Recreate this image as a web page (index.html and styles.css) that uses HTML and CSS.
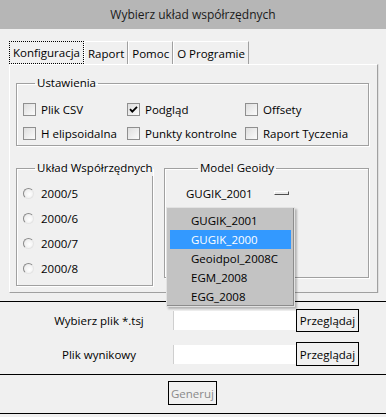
FILE: index.html
```html
<!DOCTYPE html>
<html lang="pl">
<head>
<meta charset="utf-8">
<title>Wybierz układ współrzędnych</title>
<link rel="stylesheet" href="styles.css">
</head>
<body>
<div class="titlebar">Wybierz układ współrzędnych</div>

<div class="tabstrip">
  <div class="tab tab-active">Konfiguracja</div>
  <div class="tab">Raport</div>
  <div class="tab">Pomoc</div>
  <div class="tab">O Programie</div>
</div>

<div class="panel">
  <fieldset class="group group-settings">
    <legend>Ustawienia</legend>
    <div class="checkgrid">
      <label class="check"><span class="box"></span>Plik CSV</label>
      <label class="check"><span class="box"><svg width="11" height="11" viewBox="0 0 11 11"><path d="M2 5.2 L4.3 7.6 L9 2.8" fill="none" stroke="#000" stroke-width="1.8"/></svg></span>Podgląd</label>
      <label class="check"><span class="box"></span>Offsety</label>
      <label class="check"><span class="box"></span>H elipsoidalna</label>
      <label class="check"><span class="box"></span>Punkty kontrolne</label>
      <label class="check"><span class="box"></span>Raport Tyczenia</label>
    </div>
  </fieldset>

  <div class="grouprow">
    <fieldset class="group group-coords">
      <legend>Układ Współrzędnych</legend>
      <label class="radio"><span class="dot"></span>2000/5</label>
      <label class="radio"><span class="dot"></span>2000/6</label>
      <label class="radio"><span class="dot"></span>2000/7</label>
      <label class="radio"><span class="dot"></span>2000/8</label>
    </fieldset>
    <fieldset class="group group-geoid">
      <legend>Model Geoidy</legend>
      <div class="combo">
        <span class="combo-value">GUGIK_2001</span>
        <span class="combo-btn"></span>
      </div>
    </fieldset>
  </div>
</div>

<div class="rule rule-first"></div>

<div class="formrow formrow-first">
  <span class="flabel">Wybierz plik *.tsj</span>
  <span class="finput"></span>
  <span class="fbutton">Przeglądaj</span>
</div>
<div class="formrow formrow-second">
  <span class="flabel">Plik wynikowy</span>
  <span class="finput"></span>
  <span class="fbutton">Przeglądaj</span>
</div>

<div class="rule rule-second"></div>

<div class="generate-row">
  <span class="gbutton">Generuj</span>
</div>

<div class="rule rule-third"></div>

<ul class="dropdown">
  <li>GUGIK_2001</li>
  <li class="selected">GUGIK_2000</li>
  <li>Geoidpol_2008C</li>
  <li>EGM_2008</li>
  <li>EGG_2008</li>
</ul>
</body>
</html>
```
FILE: styles.css
```css
html, body {
  margin: 0;
  padding: 0;
}
body {
  position: relative;
  width: 386px;
  height: 417px;
  overflow: hidden;
  background: #f0f0f0;
  font-family: "Open Sans", "Noto Sans", sans-serif;
  font-size: 11.5px;
  color: #000;
}

.titlebar {
  height: 29px;
  display: flex;
  align-items: center;
  justify-content: center;
  background: #b6b6b6;
  color: #1a1a1a;
  font-size: 12px;
}

.tabstrip {
  display: flex;
  margin: 12px 0 0 9px;
  height: 23px;
}
.tab {
  display: flex;
  align-items: center;
  padding: 0 3px;
  border-left: 1px solid #fff;
  border-top: 1px solid #fff;
  border-right: 1px solid #a0a0a0;
  box-sizing: border-box;
  height: 23px;
}
.tab-active {
  border: 1px dotted #000;
  padding: 0 3px;
}

.panel {
  margin: 0 8px 0 9px;
  height: 229px;
  box-sizing: border-box;
  border-top: 1px solid #fff;
  border-left: 1px solid #fff;
  border-right: 1px solid #a0a0a0;
  border-bottom: 1px solid #a0a0a0;
  box-shadow: 1px 0 0 #e0e0e0;
  padding: 10px 0 0 6px;
}

.group {
  margin: 0;
  border: 1px solid #a0a0a0;
  box-shadow: 1px 1px 0 #fff, inset 1px 1px 0 #fff;
  padding: 0;
  box-sizing: border-box;
  min-width: 0;
}
.group legend {
  padding: 0 2px;
  margin-left: 12px;
  line-height: 16px;
  white-space: nowrap;
}

.group-settings {
  width: 353px;
  padding: 6px 0 0 6px;
}
.checkgrid {
  display: grid;
  grid-template-columns: 104px 118px auto;
  grid-auto-rows: 24px;
}
.check {
  display: flex;
  align-items: center;
  white-space: nowrap;
}
.box {
  width: 13px;
  height: 13px;
  box-sizing: border-box;
  border: 1px solid #8f8f8f;
  background: linear-gradient(135deg, #dedede, #fbfbfb);
  margin-right: 5px;
  display: flex;
  align-items: center;
  justify-content: center;
}

.grouprow {
  display: flex;
  align-items: flex-start;
  gap: 11px;
  margin-top: 14px;
}
.group-coords {
  width: 137px;
  height: 126px;
  padding: 5px 0 0 6px;
}
.radio {
  display: flex;
  align-items: center;
  height: 25px;
}
.dot {
  width: 11px;
  height: 11px;
  box-sizing: border-box;
  border-radius: 50%;
  border: 1px solid;
  border-color: #8a8a8a #e4e4e4 #e4e4e4 #8a8a8a;
  background: radial-gradient(circle at 60% 60%, #ffffff, #e6e6e6);
  margin-right: 7px;
}

.group-geoid {
  width: 205px;
  height: 118px;
  padding: 6px 0 0 21px;
}
.combo {
  display: flex;
  align-items: center;
  height: 22px;
}
.combo-value {
  width: 88px;
}
.combo-btn {
  width: 15px;
  height: 4px;
  box-sizing: border-box;
  background: #e8e8e8;
  border: 1px solid;
  border-color: #fff #505050 #505050 #fff;
}

.rule {
  height: 1px;
  background: #000;
}
.rule-first {
  margin-top: 8px;
}

.formrow {
  display: grid;
  grid-template-columns: 144px 123px 63px;
  align-items: center;
  padding-left: 29px;
}
.formrow-first {
  margin-top: 7px;
  height: 23px;
}
.formrow-second {
  margin-top: 10px;
  height: 24px;
}
.flabel {
  text-align: center;
  white-space: nowrap;
  padding-right: 4px;
}
.finput {
  height: 19px;
  background: #fff;
  border-left: 1px solid #cfcfcf;
  box-sizing: border-box;
}
.fbutton {
  height: 100%;
  box-sizing: border-box;
  border: 1px solid #000;
  display: flex;
  align-items: center;
  justify-content: center;
}

.rule-second {
  margin-top: 8px;
}
.generate-row {
  display: flex;
  padding-left: 168px;
  margin-top: 6px;
}
.gbutton {
  width: 49px;
  height: 24px;
  box-sizing: border-box;
  border: 1px solid #000;
  display: flex;
  align-items: center;
  justify-content: center;
  color: #8a8a8a;
}
.rule-third {
  margin-top: 8px;
}

.dropdown {
  position: absolute;
  left: 166px;
  top: 207px;
  width: 129px;
  height: 100px;
  box-sizing: border-box;
  margin: 0;
  padding: 3px 3px 0;
  list-style: none;
  background: #c3c3c3;
  border: 1px solid #e2e2e2;
  box-shadow: inset -1px -1px 0 #8c8c8c, 2px 2px 2px rgba(0,0,0,0.25);
}
.dropdown li {
  height: 19px;
  line-height: 19px;
  padding-left: 21px;
}
.dropdown li.selected {
  background: #3399ff;
  color: #fff;
}
```
